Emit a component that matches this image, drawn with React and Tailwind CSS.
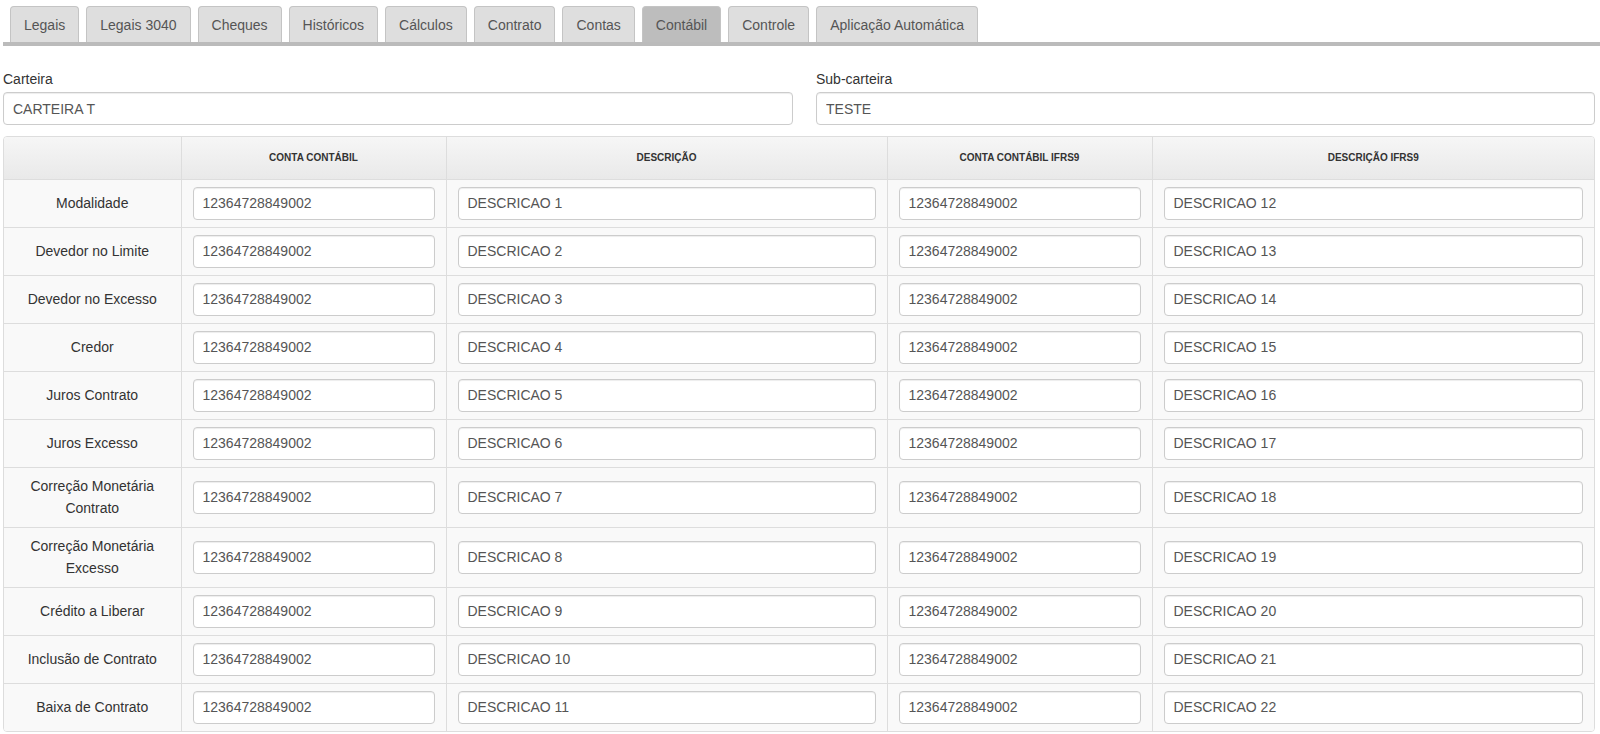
import { useState } from 'react';

const TABS = [
  'Legais',
  'Legais 3040',
  'Cheques',
  'Históricos',
  'Cálculos',
  'Contrato',
  'Contas',
  'Contábil',
  'Controle',
  'Aplicação Automática',
];

const ROWS = [
  ['Modalidade'],
  ['Devedor no Limite'],
  ['Devedor no Excesso'],
  ['Credor'],
  ['Juros Contrato'],
  ['Juros Excesso'],
  ['Correção Monetária', 'Contrato'],
  ['Correção Monetária', 'Excesso'],
  ['Crédito a Liberar'],
  ['Inclusão de Contrato'],
  ['Baixa de Contrato'],
];

const inputClass =
  'h-[33px] w-full rounded border border-[#ccc] bg-white pl-[9px] pr-2 text-sm text-[#555] shadow-[inset_0_1px_1px_rgba(0,0,0,0.075)] outline-none';

function Field({ label, value, width }) {
  return (
    <div className={`flex flex-col ${width}`}>
      <label className="mb-[3px] text-sm leading-5 text-[#333]">{label}</label>
      <input className={inputClass} defaultValue={value} />
    </div>
  );
}

export default function App() {
  const [active, setActive] = useState('Contábil');

  return (
    <div className="min-h-screen bg-white pl-[3px] pt-[6px]" style={{ fontFamily: '"Liberation Sans", Arial, sans-serif' }}>
      <div className="flex gap-[7px] border-b-4 border-[#bbb] pl-[7px]">
        {TABS.map((tab) => (
          <button
            key={tab}
            type="button"
            onClick={() => setActive(tab)}
            className={`h-[36px] rounded-t border border-b-0 border-[#c4c4c4] px-[13px] text-sm text-[#555] ${
              active === tab ? 'bg-[#bdbdbd]' : 'bg-[#dedede]'
            }`}
          >
            {tab}
          </button>
        ))}
      </div>

      <div className="mt-[23px] flex w-[1592px] gap-[23px]">
        <Field label="Carteira" value="CARTEIRA T" width="w-[790px]" />
        <Field label="Sub-carteira" value="TESTE" width="w-[779px]" />
      </div>

      <div className="mt-[11px] w-[1592px] overflow-hidden rounded border border-[#ddd]">
        <table className="w-full table-fixed border-collapse text-sm text-[#333]">
          <colgroup>
            <col className="w-[177px]" />
            <col className="w-[265px]" />
            <col className="w-[441px]" />
            <col className="w-[265px]" />
            <col />
          </colgroup>
          <thead>
            <tr className="h-[42px] bg-gradient-to-b from-[#f6f6f6] to-[#e9e9e9]">
              <th className="border-b border-[#ddd]" />
              {['Conta Contábil', 'Descrição', 'Conta Contábil IFRS9', 'Descrição IFRS9'].map((h) => (
                <th key={h} className="border-b border-l border-[#ddd] text-[10px] font-bold uppercase text-[#333]">
                  {h}
                </th>
              ))}
            </tr>
          </thead>
          <tbody>
            {ROWS.map((lines, i) => (
              <tr key={i} className="bg-[#f9f9f9]">
                <td className={`px-2 py-[7px] text-center leading-[22.5px] ${i > 0 ? 'border-t border-[#ddd]' : ''}`}>
                  {lines.map((l) => (
                    <div key={l}>{l}</div>
                  ))}
                </td>
                <td className={`border-l border-[#ddd] px-[11px] py-[7px] ${i > 0 ? 'border-t' : ''}`}>
                  <input className={inputClass} defaultValue="12364728849002" />
                </td>
                <td className={`border-l border-[#ddd] px-[11px] py-[7px] ${i > 0 ? 'border-t' : ''}`}>
                  <input className={inputClass} defaultValue={`DESCRICAO ${i + 1}`} />
                </td>
                <td className={`border-l border-[#ddd] px-[11px] py-[7px] ${i > 0 ? 'border-t' : ''}`}>
                  <input className={inputClass} defaultValue="12364728849002" />
                </td>
                <td className={`border-l border-[#ddd] px-[11px] py-[7px] ${i > 0 ? 'border-t' : ''}`}>
                  <input className={inputClass} defaultValue={`DESCRICAO ${i + 12}`} />
                </td>
              </tr>
            ))}
          </tbody>
        </table>
      </div>
    </div>
  );
}
